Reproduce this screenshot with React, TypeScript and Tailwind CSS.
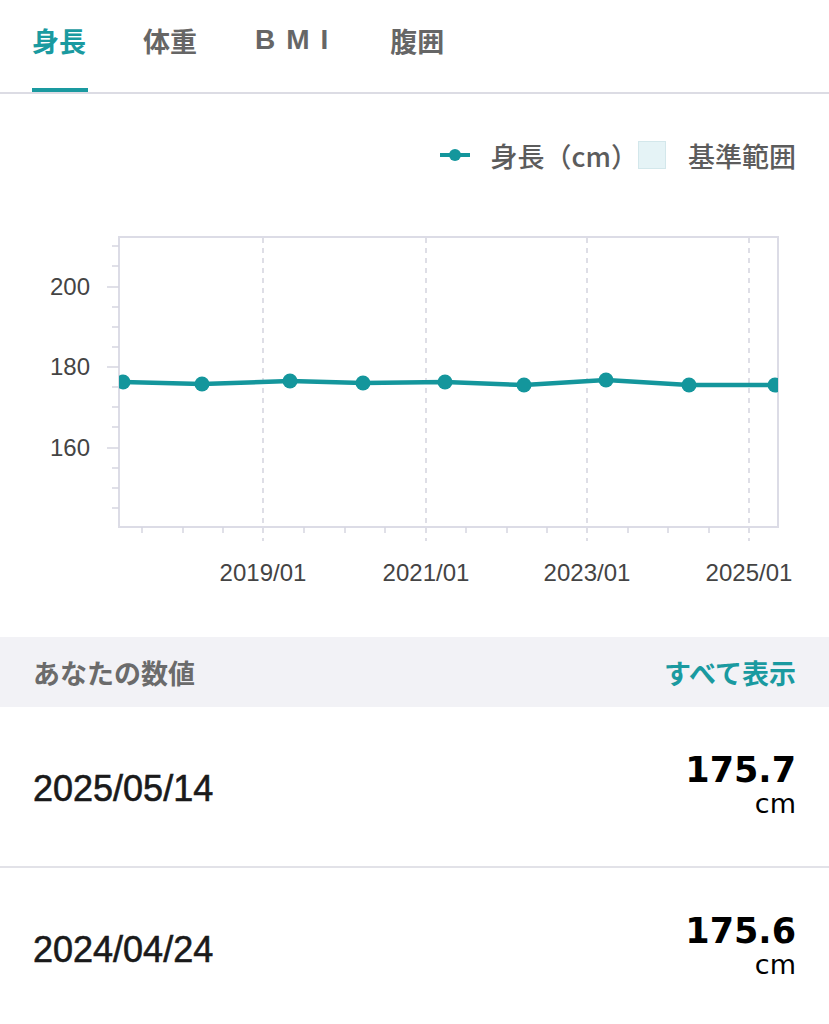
import React from "react";

const TEAL = "#14969c";

const points: [number, number][] = [
  [123, 382],
  [202, 384],
  [290, 381],
  [363, 383],
  [445, 382],
  [524, 385],
  [606, 380],
  [689, 385],
  [775, 385],
];

const yMajor = [
  { y: 287, label: "200" },
  { y: 367, label: "180" },
  { y: 448, label: "160" },
];
const yMinor = [246, 266, 307, 327, 347, 387, 407, 427, 468, 488, 508];

const xMajor = [
  { x: 263, label: "2019/01" },
  { x: 426, label: "2021/01" },
  { x: 587, label: "2023/01" },
  { x: 749, label: "2025/01" },
];
const xMinor = [142, 183, 223, 304, 345, 385, 466, 507, 547, 628, 668, 709];

const records = [
  { date: "2025/05/14", value: "175.7" },
  { date: "2024/04/24", value: "175.6" },
];

const jp = "font-['Noto_Sans_CJK_JP',sans-serif]";

const Tabs = () => (
  <div className={`flex h-[94px] border-b-2 border-[#dcdce4] ${jp}`}>
    <div className="ml-[32px] flex flex-col justify-between pt-[27px]">
      <span className="text-[27px] leading-none font-bold text-[#1a9aa0]">身長</span>
      <div className="h-[4px] w-[56px] bg-[#1a9aa0]" />
    </div>
    <div className="ml-[55px] pt-[27px]">
      <span className="text-[27px] leading-none font-bold text-[#666666]">体重</span>
    </div>
    <div className="ml-[58px] pt-[26px]">
      <span className="font-['Liberation_Sans',sans-serif] text-[28px] leading-none font-bold tracking-[11px] text-[#666666]">
        BMI
      </span>
    </div>
    <div className="ml-[51px] pt-[27px]">
      <span className="text-[27px] leading-none font-bold text-[#666666]">腹囲</span>
    </div>
  </div>
);

const Legend = () => (
  <div className={`flex items-center justify-end pt-[41px] pb-[15px] pr-[33px] h-[96px] ${jp}`}>
    <svg width="30" height="14" viewBox="0 0 30 14">
      <line x1="0" y1="7" x2="30" y2="7" stroke={TEAL} strokeWidth="4" />
      <circle cx="15" cy="7" r="6" fill={TEAL} />
    </svg>
    <span className="ml-[21px] text-[27px] leading-none font-medium text-[#5c5c5c]">身長（cm）</span>
    <div className="h-[28px] w-[28px] border border-[#d3e7eb] bg-[#e5f3f6]" />
    <span className="ml-[22px] text-[27px] leading-none font-medium text-[#5c5c5c]">基準範囲</span>
  </div>
);

const Chart = () => {
  const path = points.map(([x, y], i) => `${i ? "L" : "M"}${x} ${y}`).join(" ");
  return (
    <svg width="829" height="447" viewBox="0 190 829 447" className="block">
      <defs>
        <clipPath id="plot">
          <rect x="119" y="237" width="659" height="290" />
        </clipPath>
      </defs>
      {xMajor.map((t) => (
        <line
          key={t.x}
          x1={t.x}
          y1="238"
          x2={t.x}
          y2="541"
          stroke="#d3d3de"
          strokeWidth="1.5"
          strokeDasharray="5 5"
        />
      ))}
      <rect x="119" y="237" width="659" height="290" fill="none" stroke="#dcdce6" strokeWidth="2" />
      {yMajor.map((t) => (
        <g key={t.y}>
          <line x1="107" y1={t.y} x2="119" y2={t.y} stroke="#d6d6e0" strokeWidth="1.5" />
          <text
            x="90"
            y={t.y + 8}
            textAnchor="end"
            fontSize="24"
            fill="#444"
            fontFamily="'Liberation Sans', sans-serif"
          >
            {t.label}
          </text>
        </g>
      ))}
      {yMinor.map((y) => (
        <line key={y} x1="112" y1={y} x2="119" y2={y} stroke="#d6d6e0" strokeWidth="1.5" />
      ))}
      {xMinor.map((x) => (
        <line key={x} x1={x} y1="527" x2={x} y2="533" stroke="#d6d6e0" strokeWidth="1.5" />
      ))}
      {xMajor.map((t) => (
        <text
          key={t.label}
          x={t.x}
          y="581"
          textAnchor="middle"
          fontSize="24"
          fill="#444"
          fontFamily="'Liberation Sans', sans-serif"
        >
          {t.label}
        </text>
      ))}
      <g clipPath="url(#plot)">
        <path d={path} fill="none" stroke={TEAL} strokeWidth="4.5" strokeLinejoin="round" />
        {points.map(([x, y]) => (
          <circle key={x} cx={x} cy={y} r="7.5" fill={TEAL} />
        ))}
      </g>
    </svg>
  );
};

const Row = ({ date, value }: { date: string; value: string }) => (
  <div className="flex h-[161px] items-center justify-between border-b-2 border-[#e2e2e8] pl-[33px] pr-[33px] pt-[4px]">
    <span className="font-['Liberation_Sans',sans-serif] text-[36px] leading-none text-[#1a1a1a] [-webkit-text-stroke:0.6px_#1a1a1a]">
      {date}
    </span>
    <div className="mb-[8px] flex flex-col items-end font-['DejaVu_Sans',sans-serif] text-black">
      <span className="text-[35px] leading-none font-bold">{value}</span>
      <span className="mt-[2px] text-[27px] leading-none">cm</span>
    </div>
  </div>
);

export default function App() {
  return (
    <div className="w-[829px] min-h-[1024px] overflow-hidden bg-white">
      <Tabs />
      <Legend />
      <Chart />
      <div className={`flex h-[70px] items-center justify-between bg-[#f2f2f6] px-[33px] ${jp}`}>
        <span className="text-[27px] leading-none font-bold text-[#6b6b6b]">あなたの数値</span>
        <span className="text-[27px] leading-none font-bold text-[#1a9aa0]">すべて表示</span>
      </div>
      {records.map((r) => (
        <Row key={r.date} date={r.date} value={r.value} />
      ))}
    </div>
  );
}
